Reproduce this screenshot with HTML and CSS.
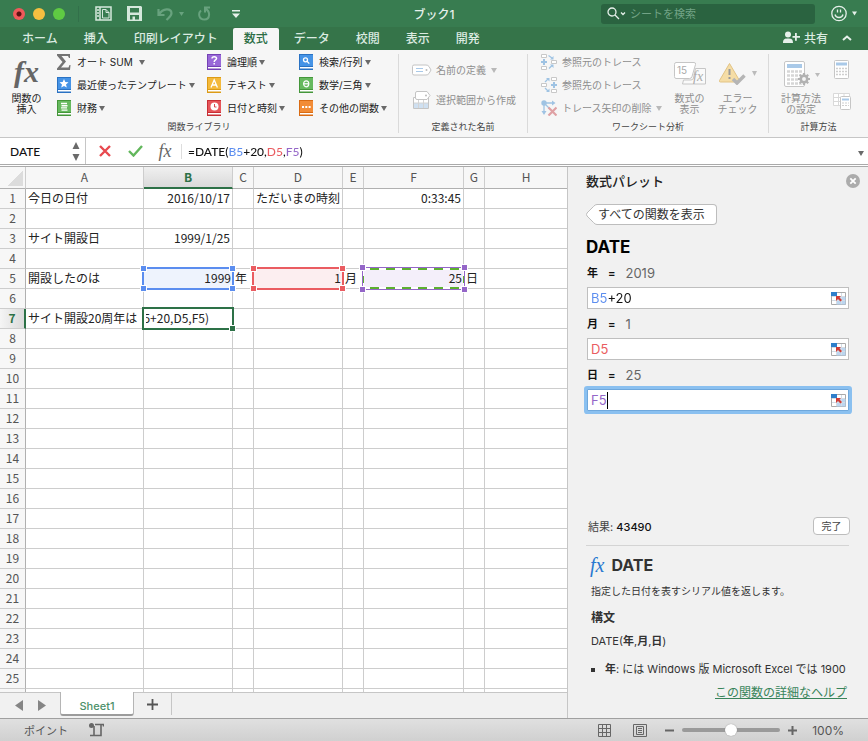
FILE: index.html
```html
<!DOCTYPE html>
<html lang="ja">
<head>
    <meta charset="UTF-8">
    <meta name="viewport" content="width=device-width, initial-scale=1.0">
    <title>ブック1</title>
    <link rel="stylesheet" href="styles.css">
</head>
<body>
    <header class="titlebar">
        <div class="quick">
            <button class="light red" aria-label="閉じる"></button>
            <button class="light yellow" aria-label="しまう"></button>
            <button class="light green" aria-label="拡大"></button>
            <span class="quick-sep"></span>
            <button class="quick-btn" aria-label="ファイル"><svg width="17" height="15" viewBox="0 0 17 15" fill="none" stroke="#d5e8dc" stroke-width="1.5"><path d="M1 1h15v13H1zM5 1v13M2 4h2M2 7h2M2 10h2"/><path d="M7.500 3.500h3.500l3 3v5.500h-6.500zM11 3.500v3h3" stroke-width="1"/></svg></button>
            <button class="quick-btn" aria-label="保存"><svg width="15" height="15" viewBox="0 0 15 15"><path d="M0 0h14l1 1v14H0z" fill="#d5e8dc"/><path d="M3 2h9v4.500H3zM3 9h9v4.500H8v-3H5.500v3H3z" fill="#387c50"/></svg></button>
            <button class="quick-btn undo" aria-label="元に戻す"><svg width="27" height="14" viewBox="0 0 27 14"><path d="M1.500 2v6h6M2 7.500C6 1 14 1 14.500 6c0 3-2 4-5 7" fill="none" stroke="#68a27e" stroke-width="2.200"/><path d="M22 5h5l-2.500 4z" fill="#68a27e"/></svg></button>
            <button class="quick-btn" aria-label="やり直し"><svg width="13" height="15" viewBox="0 0 13 15"><path d="M12 1.500H7v5M7 2.500c6 3 5 11-.5 11C.500 13.500 0 7 3 4.500" fill="none" stroke="#68a27e" stroke-width="2"/></svg></button>
            <button class="quick-btn more" aria-label="カスタマイズ"><svg width="8" height="8" viewBox="0 0 8 8"><path d="M0 0h8v1.500H0zM0 3.500h8L4 8z" fill="#e6f0ea"/></svg></button>
        </div>
        <h1 class="title">ブック1</h1>
        <div class="title-right">
            <label class="search">
                <svg width="19" height="13" viewBox="0 0 19 13" fill="none" stroke="#e6f0ea" stroke-width="1.300"><circle cx="5" cy="5" r="4"/><path d="M8 8l4 4M14 5.500l2 2 2-2"/></svg>
                <input type="search" placeholder="シートを検索" aria-label="シートを検索">
            </label>
            <button class="smile" aria-label="フィードバック"><svg width="26" height="17" viewBox="0 0 26 17"><g fill="none" stroke="#e6f0ea" stroke-width="1.300"><circle cx="8" cy="8.500" r="7.200"/><path d="M4 9.500c1 4 7 4 8 0M6.500 4.500v3M9.500 4.500v3"/></g><path d="M21 6.500h5l-2.500 4z" fill="#e6f0ea"/></svg></button>
        </div>
    </header>

    <nav class="tabs">
        <button class="tab">ホーム</button>
        <button class="tab">挿入</button>
        <button class="tab">印刷レイアウト</button>
        <button class="tab active">数式</button>
        <button class="tab">データ</button>
        <button class="tab">校閲</button>
        <button class="tab">表示</button>
        <button class="tab">開発</button>
        <button class="share"><svg width="17" height="13" viewBox="0 0 17 13" fill="#e6f0ea"><circle cx="5" cy="3.500" r="3"/><path d="M0 12c0-4 2-4.500 5-4.500s5 .5 5 4.500zM12 2h1.800v3H17v1.700h-3.200v3H12v-3H9.500V5H12z"/></svg>共有</button>
        <button class="collapse" aria-label="リボンを折りたたむ"><svg width="10" height="6" viewBox="0 0 10 6"><path d="M1 5l4-3.500L9 5" fill="none" stroke="#e6f0ea" stroke-width="2"/></svg></button>
    </nav>

    <section class="ribbon">
        <div class="group library">
            <div class="group-body">
                <button class="big"><span class="fx">fx</span>関数の<br>挿入</button>
                <div class="stack wide">
                    <button class="cmd"><svg width="14" height="16" viewBox="0 0 14 16"><path d="M0 0h13v4h-1L11 2H4.500l4.500 5.500L4 13.500h7.500l1-2.500h1l-.5 5H0v-1.500L5.500 8 0 1.500z" fill="#737373"/></svg>オート SUM<i class="arrow gap"></i></button>
                    <button class="cmd"><svg width="14" height="16" viewBox="0 0 14 16"><path d="M0 0h14v16H0z" fill="#2a72c3"/><path d="M1 1h13v11H1z" fill="#4593e6"/><path d="M1 13h13v1.500H1z" fill="#fff"/><path d="M7 2l1.300 3 3.200.300L9 7.400l.8 3.100L7 8.900l-2.800 1.600.8-3.100-2.500-2.100 3.200-.3z" fill="#fff"/></svg>最近使ったテンプレート<i class="arrow"></i></button>
                    <button class="cmd"><svg width="14" height="16" viewBox="0 0 14 16"><path d="M0 0h14v16H0z" fill="#44963a"/><path d="M1 1h13v11H1z" fill="#66b95e"/><path d="M1 13h13v1.500H1z" fill="#fff"/><g stroke="#fff" stroke-width="1.400"><path d="M4 3.500h6M4.500 5.700h6M4 7.900h6M4.500 10.100h6"/></g></svg>財務<i class="arrow"></i></button>
                </div>
                <div class="stack mid">
                    <button class="cmd"><svg width="14" height="16" viewBox="0 0 14 16"><path d="M0 0h14v16H0z" fill="#7441b5"/><path d="M1 1h13v11H1z" fill="#9968d8"/><path d="M1 13h13v1.500H1z" fill="#fff"/><path d="M5 4.500c0-2.500 4.500-2.500 4.500 0C9.500 6 7.200 6 7.200 8M7.200 9v1.500" fill="none" stroke="#fff" stroke-width="1.500"/></svg>論理順<i class="arrow"></i></button>
                    <button class="cmd"><svg width="14" height="16" viewBox="0 0 14 16"><path d="M0 0h14v16H0z" fill="#dc9b16"/><path d="M1 1h13v11H1z" fill="#f4b93b"/><path d="M1 13h13v1.500H1z" fill="#fff"/><path d="M4 10.500L7.200 3l3.200 7.500M5 8h4.400" fill="none" stroke="#fff" stroke-width="1.300"/></svg>テキスト<i class="arrow"></i></button>
                    <button class="cmd"><svg width="14" height="16" viewBox="0 0 14 16"><path d="M0 0h14v16H0z" fill="#c72f35"/><path d="M1 1h13v11H1z" fill="#e6555a"/><path d="M1 13h13v1.500H1z" fill="#fff"/><circle cx="7.500" cy="6.500" r="4" fill="#fff"/><path d="M7.500 4v3h2" fill="none" stroke="#d9474c"/></svg>日付と時刻<i class="arrow"></i></button>
                </div>
                <div class="stack">
                    <button class="cmd"><svg width="14" height="16" viewBox="0 0 14 16"><path d="M0 0h14v16H0z" fill="#2a72c3"/><path d="M1 1h13v11H1z" fill="#4593e6"/><path d="M1 13h13v1.500H1z" fill="#fff"/><g fill="none" stroke="#fff" stroke-width="1.300"><circle cx="6.500" cy="5.800" r="2"/><path d="M8 7.300l2.300 2.300"/></g></svg>検索/行列<i class="arrow"></i></button>
                    <button class="cmd"><svg width="14" height="16" viewBox="0 0 14 16"><path d="M0 0h14v16H0z" fill="#44963a"/><path d="M1 1h13v11H1z" fill="#66b95e"/><path d="M1 13h13v1.500H1z" fill="#fff"/><g fill="none" stroke="#fff" stroke-width="1.200"><ellipse cx="7.200" cy="6.800" rx="2.600" ry="3"/><path d="M4.600 6.800h5.200"/></g></svg>数学/三角<i class="arrow"></i></button>
                    <button class="cmd"><svg width="14" height="16" viewBox="0 0 14 16"><path d="M0 0h14v16H0z" fill="#d96b13"/><path d="M1 1h13v11H1z" fill="#f28c36"/><path d="M1 13h13v1.500H1z" fill="#fff"/><path d="M3 6h2v2H3zM6.300 6h2v2h-2zM9.600 6h2v2h-2z" fill="#fff"/></svg>その他の関数<i class="arrow"></i></button>
                </div>
            </div>
            <p class="group-label">関数ライブラリ</p>
        </div>
        <div class="group names">
            <div class="group-body">
                <div class="stack two">
                    <button class="cmd" disabled><svg width="20" height="18" viewBox="0 0 20 18"><path d="M2 4h12q2 0 3 1.500l2 3.500-2 3.500q-1 1.500-3 1.500H2q-1.500 0-1.500-1.500v-7Q.500 4 2 4z" fill="#fff" stroke="#c4c4c4"/><path d="M4 7.500h7M4 10.500h7" stroke="#a9c9e8"/><circle cx="14.500" cy="9" r="1" fill="#bbb"/></svg>名前の定義<i class="arrow"></i></button>
                    <button class="cmd" disabled><svg width="20" height="18" viewBox="0 0 20 18"><path d="M1.500 6.500h15v11h-15z" fill="#fff" stroke="#c4c4c4"/><path d="M2 12h14v5H2z" fill="#cfe0f1"/><path d="M6.500 9v8M11.500 9v8M2 12h14" stroke="#d4d4d4"/><path d="M5 .5h10l3 4-3 4H5q-1.500 0-1.500-1.500V2Q3.500.5 5 .5z" fill="#fff" stroke="#c4c4c4"/><circle cx="14" cy="4.500" r="1" fill="#bbb"/></svg>選択範囲から作成</button>
                </div>
            </div>
            <p class="group-label">定義された名前</p>
        </div>
        <div class="group trace">
            <div class="group-body">
                <div class="stack">
                    <button class="cmd" disabled><svg width="16" height="16" viewBox="0 0 16 16" fill="none"><path d="M.500.500h5v3h-5zM.500 12.500h5v3h-5zM10.500 6.500h5v3h-5z" fill="#fff" stroke="#c8c8c8"/><path d="M3 5v6M0 8h6" stroke="#9fc3e3" stroke-width="2"/><path d="M7.500 1.500L11 4M8 14.500l3-3" stroke="#9fc3e3" stroke-width="1.300"/><path d="M12.500 2v3.500H9zM12.500 14v-3.500H9z" fill="#9fc3e3"/></svg>参照元のトレース</button>
                    <button class="cmd" disabled><svg width="16" height="16" viewBox="0 0 16 16" fill="none"><path d="M10.500.500h5v3h-5zM10.500 12.500h5v3h-5zM.500 6.500h5v3h-5z" fill="#fff" stroke="#c8c8c8"/><path d="M13 5v6M10 8h6" stroke="#9fc3e3" stroke-width="2"/><path d="M4 5l3-3M4 11l3 3" stroke="#9fc3e3" stroke-width="1.300"/><path d="M5 1h3.500v3.500zM5 15h3.500v-3.500z" fill="#9fc3e3"/></svg>参照先のトレース</button>
                    <button class="cmd" disabled><svg width="16" height="16" viewBox="0 0 16 16" fill="none"><path d="M3 3h9M3 3v9M3 3l6 6" stroke="#9fc3e3" stroke-width="1.300"/><path d="M11 .5L14.500 3 11 5.500zM.500 11L3 15l2.500-4z" fill="#9fc3e3"/><circle cx="3" cy="3" r="2.700" fill="#9fc3e3"/><path d="M7.500 7.500l8 8M15.500 7.500l-8 8" stroke="#dfa1a4" stroke-width="2.200"/></svg>トレース矢印の削除<i class="arrow"></i></button>
                </div>
                <button class="big" disabled><svg width="32" height="23" viewBox="0 0 32 23"><path d="M2 .5h18q2 0 1.500 2L18 14.500q-.5 2-2.500 2H2q-1.500 0-1.500-2v-12Q.500.500 2 .500z" fill="#fff" stroke="#c6c6c6"/><path d="M21.500 6.500h10v15.500h-23L9.500 18H17q2 0 2.500-2z" fill="#fafafa" stroke="#c6c6c6"/><text x="3" y="12" class="icon-num">15</text><text x="19" y="19" class="icon-fx">fx</text></svg>数式の<br>表示</button>
                <button class="big with-arrow" disabled><svg width="40" height="23" viewBox="0 0 40 23"><path d="M11.500 1.500l10 17q.5 1.500-1 1.500h-18q-1.500 0-1-1.500z" fill="#f5dda6" stroke="#e2c384"/><path d="M11.500 7v6M11.500 15v2" stroke="#999" stroke-width="2"/><path d="M15 17l4 4 7.500-7.500" fill="none" stroke="#b5b5b5" stroke-width="3.500"/><path d="M34 9h5l-2.500 5z" fill="#bbb"/></svg>エラー<br>チェック</button>
            </div>
            <p class="group-label">ワークシート分析</p>
        </div>
        <div class="group calc">
            <div class="group-body">
                <button class="big with-arrow" disabled><svg width="36" height="26" viewBox="0 0 36 26"><rect x=".5" y=".5" width="20" height="25" rx="1.500" fill="#fff" stroke="#c6c6c6"/><path d="M3 3h15v4H3z" fill="#a9c9e8"/><path d="M3 10.500h15M3 14.500h15M3 18.500h15M3 22.500h15" stroke="#d6d6d6" stroke-width="2.500" stroke-dasharray="3 1"/><circle cx="20" cy="18" r="5.500" fill="#f5f5f5"/><circle cx="20" cy="18" r="3.200" fill="none" stroke="#b2b2b2" stroke-width="2.500"/><path d="M20 12v3M20 21v3M14 18h3M23 18h3M15.800 13.800l2 2M22.200 20.200l2 2M24.200 13.800l-2 2M17.800 20.200l-2 2" stroke="#b2b2b2" stroke-width="2.200"/><path d="M31 12h5l-2.500 4z" fill="#bbb"/></svg>計算方法<br>の設定</button>
                <div class="stack pair">
                    <button class="cmd" disabled aria-label="再計算"><svg width="18" height="19" viewBox="0 0 18 19"><rect x="1.500" y=".5" width="14" height="18" rx="1" fill="#fff" stroke="#c6c6c6"/><path d="M3 2.500h11v3H3z" fill="#a9c9e8"/><path d="M3 8.500h11M3 11.500h11M3 14.500h11" stroke="#cfcfcf" stroke-width="1.500" stroke-dasharray="2 1"/></svg></button>
                    <button class="cmd" disabled aria-label="シート再計算"><svg width="18" height="18" viewBox="0 0 18 18"><path d="M.500 1.500h16v12H.500zM5.500 1.500v12M11 1.500v3M.500 5.500h16M.500 9.500h8" fill="#fff" stroke="#d9d9d9"/><rect x="7.500" y="4.500" width="10" height="13" rx="1" fill="#fff" stroke="#c6c6c6"/><path d="M9 6.500h7v2H9z" fill="#a9c9e8"/><path d="M9 11h7M9 13.500h7" stroke="#cfcfcf" stroke-dasharray="2 1"/></svg></button>
                </div>
            </div>
            <p class="group-label">計算方法</p>
        </div>
    </section>

    <section class="formula-bar">
        <div class="name-box">
            <input type="text" value="DATE" aria-label="名前ボックス">
            <svg width="8" height="19" viewBox="0 0 8 19" fill="#6a6a6a"><path d="M4 0l3.500 7h-7zM4 19l3.500-7h-7z"/></svg>
        </div>
        <button class="bar-btn" aria-label="キャンセル"><svg width="12" height="12" viewBox="0 0 12 12"><path d="M1 1l10 10M11 1L1 11" stroke="#e8494f" stroke-width="2.400"/></svg></button>
        <button class="bar-btn" aria-label="入力"><svg width="15" height="12" viewBox="0 0 15 12"><path d="M1 6l4.500 4.500L14 1" fill="none" stroke="#62b75c" stroke-width="2.400"/></svg></button>
        <button class="bar-btn fx small">fx</button>
        <input class="formula" type="text" value="=DATE(B5+20,D5,F5)" aria-label="数式">
        <button class="expand" aria-label="数式バーを広げる"><i class="arrow"></i></button>
    </section>

    <main class="work">
        <div class="book">
            <div class="grid">
                <table class="sheet">
                    <colgroup>
                        <col class="c-num"><col class="c-a"><col class="c-b"><col class="c-s"><col class="c-b"><col class="c-s"><col class="c-f"><col class="c-s"><col>
                    </colgroup>
                    <thead>
                        <tr><th class="corner"></th><th>A</th><th class="current">B</th><th>C</th><th>D</th><th>E</th><th>F</th><th>G</th><th>H</th></tr>
                    </thead>
                    <tbody>
                        <tr><th>1</th><td>今日の日付</td><td class="num">2016/10/17</td><td></td><td>ただいまの時刻</td><td></td><td class="num">0:33:45</td><td></td><td></td></tr>
                        <tr><th>2</th><td></td><td></td><td></td><td></td><td></td><td></td><td></td><td></td></tr>
                        <tr><th>3</th><td>サイト開設日</td><td class="num">1999/1/25</td><td></td><td></td><td></td><td></td><td></td><td></td></tr>
                        <tr><th>4</th><td></td><td></td><td></td><td></td><td></td><td></td><td></td><td></td></tr>
                        <tr><th>5</th><td>開設したのは</td><td class="num ref blue">1999<span class="range"><i></i><i></i><i></i><i></i></span></td><td>年</td><td class="num ref rose">1<span class="range"><i></i><i></i><i></i><i></i></span></td><td>月</td><td class="num ref purple">25<span class="range"><i></i><i></i><i></i><i></i></span></td><td>日</td><td></td></tr>
                        <tr><th>6</th><td></td><td></td><td></td><td></td><td></td><td></td><td></td><td></td></tr>
                        <tr><th class="current">7</th><td>サイト開設20周年は</td><td class="editing"><span class="edit-text">5+20,D5,F5)</span><span class="cursor"></span></td><td></td><td></td><td></td><td></td><td></td><td></td></tr>
                    </tbody>
                </table>
            </div>
            <div class="sheet-tabs">
                <button class="nav" aria-label="前のシート"><svg width="8" height="11" viewBox="0 0 8 11"><path d="M8 0v11L0 5.500z" fill="#858585"/></svg></button>
                <button class="nav" aria-label="次のシート"><svg width="8" height="11" viewBox="0 0 8 11"><path d="M0 0v11l8-5.500z" fill="#858585"/></svg></button>
                <button class="sheet-tab">Sheet1</button>
                <button class="add" aria-label="シートの追加"><svg width="11" height="11" viewBox="0 0 11 11"><path d="M5.500 0v11M0 5.500h11" stroke="#555" stroke-width="1.800"/></svg></button>
            </div>
        </div>

        <aside class="palette">
            <div class="palette-head">
                <h2>数式パレット</h2>
                <button class="close" aria-label="閉じる"><svg width="14" height="14" viewBox="0 0 14 14"><circle cx="7" cy="7" r="7" fill="#acacac"/><path d="M4.300 4.300l5.400 5.400M9.700 4.300L4.300 9.700" stroke="#fff" stroke-width="1.800"/></svg></button>
            </div>
            <button class="show-all"><svg width="14" height="21" viewBox="0 0 14 21"><path d="M14 .5h-3Q9 .5 7.500 2.500L1 9q-1 1.500 0 3l6.500 6.500q1.500 2 3.500 2h3" fill="#fff" stroke="#bdbdbd"/></svg><span>すべての関数を表示</span></button>
            <h3>DATE</h3>
            <div class="field">
                <label for="year"><b>年</b><b>=</b><span>2019</span></label>
                <div class="box"><input id="year" class="in-blue" type="text" value="B5+20"><button class="pick" aria-label="範囲を選択"><svg width="15" height="13" viewBox="0 0 15 13"><path d="M.500.500h14v12H.500z" fill="#fff" stroke="#aaa"/><path d="M5.500 5h9v7.500h-9z" fill="#bcd6f0"/><path d="M5.500 1v11M10.500 1v11M1 4.500h13M1 8.500h13" stroke="#d4dde6"/><path d="M0 0h6v4H0z" fill="#2f7fca"/><path d="M5 4h5L8.500 5.500 11 8 9.500 9.500 7 7 5 9z" fill="#d13d35"/></svg></button></div>
            </div>
            <div class="field">
                <label for="month"><b>月</b><b>=</b><span>1</span></label>
                <div class="box"><input id="month" class="in-red" type="text" value="D5"><button class="pick" aria-label="範囲を選択"><svg width="15" height="13" viewBox="0 0 15 13"><path d="M.500.500h14v12H.500z" fill="#fff" stroke="#aaa"/><path d="M5.500 5h9v7.500h-9z" fill="#bcd6f0"/><path d="M5.500 1v11M10.500 1v11M1 4.500h13M1 8.500h13" stroke="#d4dde6"/><path d="M0 0h6v4H0z" fill="#2f7fca"/><path d="M5 4h5L8.500 5.500 11 8 9.500 9.500 7 7 5 9z" fill="#d13d35"/></svg></button></div>
            </div>
            <div class="field">
                <label for="day"><b>日</b><b>=</b><span>25</span></label>
                <div class="box focused"><input id="day" class="in-purple" type="text" value="F5"><span class="caret"></span><button class="pick" aria-label="範囲を選択"><svg width="15" height="13" viewBox="0 0 15 13"><path d="M.500.500h14v12H.500z" fill="#fff" stroke="#aaa"/><path d="M5.500 5h9v7.500h-9z" fill="#bcd6f0"/><path d="M5.500 1v11M10.500 1v11M1 4.500h13M1 8.500h13" stroke="#d4dde6"/><path d="M0 0h6v4H0z" fill="#2f7fca"/><path d="M5 4h5L8.500 5.500 11 8 9.500 9.500 7 7 5 9z" fill="#d13d35"/></svg></button></div>
            </div>
            <div class="result">
                <p>結果: <span>43490</span></p>
                <button class="done">完了</button>
            </div>
            <div class="help">
                <h4><span class="fx help-fx">fx</span>DATE</h4>
                <p class="desc">指定した日付を表すシリアル値を返します。</p>
                <h5>構文</h5>
                <p class="syntax">DATE(<b>年</b>,<b>月</b>,<b>日</b>)</p>
                <ul>
                    <li><b>年</b>: には Windows 版 Microsoft Excel では 1900</li>
                </ul>
                <a href="#">この関数の詳細なヘルプ</a>
            </div>
        </aside>
    </main>

    <footer class="status">
        <span class="mode">ポイント</span>
        <button aria-label="マクロの記録"><svg width="15" height="14" viewBox="0 0 15 14"><circle cx="2.500" cy="2.500" r="2.500" fill="#666"/><path d="M6 1.500h8.500v2M12 2v10.500H1M5 3v9" fill="none" stroke="#666" stroke-width="1.600"/></svg></button>
        <span class="spacer"></span>
        <button class="view" aria-label="標準"><svg width="13" height="13" viewBox="0 0 13 13"><path d="M.500.500h12v12H.500zM4.500.500v12M8.500.500v12M.500 4.500h12M.500 8.500h12" fill="none" stroke="#666"/></svg></button>
        <button class="view" aria-label="ページレイアウト"><svg width="14" height="13" viewBox="0 0 14 13"><path d="M.500.500h13v12H.500zM3.500 2.500h7v8h-7zM5 4.500h4M5 6.500h4M5 8.500h4" fill="none" stroke="#666"/></svg></button>
        <button class="minus" aria-label="縮小"><svg width="9" height="9" viewBox="0 0 9 9"><path d="M0 4.500h9" stroke="#666" stroke-width="2"/></svg></button>
        <input class="zoom" type="range" min="0" max="100" value="50" aria-label="ズーム">
        <button class="plus" aria-label="拡大"><svg width="9" height="9" viewBox="0 0 9 9"><path d="M0 4.500h9M4.500 0v9" stroke="#666" stroke-width="2"/></svg></button>
        <span class="percent">100%</span>
    </footer>

    <script>
        // fill the rest of the sheet with empty rows
        const tbody = document.querySelector('.sheet tbody');
        for (let n = 8; n <= 26; n++) {
            const row = tbody.insertRow();
            const head = document.createElement('th');
            head.textContent = n <= 25 ? n : '';
            row.appendChild(head);
            for (let c = 0; c < 8; c++) {
                row.insertCell();
            }
        }
    </script>
</body>
</html>
```

FILE: styles.css
```css
* {
    box-sizing: border-box;
}
body {
    margin: 0;
    height: 100vh;
    display: flex;
    flex-direction: column;
    overflow: hidden;
    background: #f1f1f1;
    color: #222;
    font-family: Inter, "Noto Sans CJK JP", sans-serif;
    font-size: 12px;
}
button, input {
    font: inherit;
    color: inherit;
    margin: 0;
    padding: 0;
    border: none;
    background: none;
}
input {
    outline: none;
    min-width: 0;
}
svg {
    display: block;
    flex: none;
}
h1, h2, h3, h4, h5, p, ul {
    margin: 0;
    padding: 0;
}
.arrow {
    display: inline-block;
    flex: none;
    border: 3px solid transparent;
    border-top: 5px solid #6a6a6a;
    border-bottom: none;
    margin-left: 4px;
}
.fx {
    font-family: "Liberation Serif", serif;
    font-style: italic;
    font-weight: bold;
    color: #666;
}

/* title bar */
.titlebar {
    display: grid;
    grid-template-columns: 1fr auto 1fr;
    align-items: center;
    height: 27px;
    flex: none;
    background: #387c50;
    color: #e6f0ea;
}
.quick {
    display: flex;
    align-items: center;
    gap: 8px;
    padding-left: 13px;
}
.light {
    width: 12px;
    height: 12px;
    border-radius: 50%;
}
.red {
    background: radial-gradient(circle, #5c1212 2px, #f0595a 3px);
}
.yellow {
    background: #f6bf40;
}
.green {
    background: #5fca43;
}
.quick-sep {
    width: 1px;
    height: 16px;
    margin: 0 8px 0 5px;
    background: #32704a;
}
.quick-btn {
    margin-right: 7px;
}
.quick-btn.undo {
    margin: 0 6px 0 0;
}
.quick-btn.more {
    margin-left: 6px;
}
.title {
    font-size: 12px;
    font-weight: 500;
}
.title-right {
    display: flex;
    justify-content: flex-end;
    align-items: center;
    gap: 16px;
    padding-right: 11px;
}
.search {
    display: flex;
    align-items: center;
    gap: 4px;
    width: 214px;
    height: 20px;
    padding-left: 6px;
    border-radius: 3px;
    background: #2a6340;
}
.search input {
    flex: 1;
    font-size: 11px;
}
.search input::placeholder {
    color: #72a386;
}

/* ribbon tabs */
.tabs {
    display: flex;
    gap: 4px;
    height: 23px;
    flex: none;
    padding: 1px 16px 0 11px;
    background: #357449;
    color: #dcebe1;
}
.tab {
    padding: 0 11px;
    font-size: 12px;
    font-weight: 500;
    line-height: 20px;
    white-space: nowrap;
}
.tab.active {
    background: #f6f6f6;
    color: #2b6d44;
    border-radius: 2px 2px 0 0;
}
.share {
    display: flex;
    align-items: center;
    gap: 4px;
    margin-left: auto;
    padding-bottom: 3px;
    font-weight: 500;
    white-space: nowrap;
}
.collapse {
    padding: 0 0 2px 10px;
}

/* ribbon */
.ribbon {
    display: flex;
    height: 88px;
    flex: none;
    background: #f6f6f6;
    border-bottom: 1px solid #c6c6c6;
    font-size: 10px;
    color: #222;
}
.group {
    display: flex;
    flex-direction: column;
    margin: 4px 0;
    border-right: 1px solid #dadada;
}
.group-body {
    display: flex;
    flex: none;
    height: 66px;
}
.group-label {
    font-size: 9px;
    line-height: 14px;
    text-align: center;
    color: #444;
}
.library {
    flex: 0 0 399px;
}
.names {
    flex: 0 0 129px;
}
.trace {
    flex: 0 0 241px;
}
.calc {
    flex: 1;
    border-right: none;
}
.big {
    display: flex;
    flex-direction: column;
    align-items: center;
    justify-content: flex-end;
    line-height: 11px;
    padding-bottom: 5px;
    white-space: nowrap;
    text-align: center;
}
.big .fx {
    font-size: 30px;
    line-height: 30px;
    margin-bottom: 6px;
}
.big svg {
    margin-bottom: 8px;
}
.library .big {
    width: 53px;
    padding-bottom: 5px;
}
.stack {
    display: flex;
    flex-direction: column;
    justify-content: space-between;
    margin-bottom: 4px;
}
.cmd {
    display: flex;
    align-items: center;
    height: 16px;
    gap: 6px;
    line-height: 16px;
    white-space: nowrap;
}
.cmd .arrow {
    margin-left: -4px;
}
.cmd .arrow.gap {
    margin-left: 0;
}
.wide {
    width: 150px;
    margin-left: 4px;
}
.mid {
    width: 92px;
}
button:disabled {
    color: #8e8e8e;
}
button:disabled .arrow {
    border-top-color: #b9b9b9;
}
.names .stack {
    margin-left: 13px;
    justify-content: center;
    gap: 14px;
}
.names .cmd {
    gap: 4px;
}
.names .cmd .arrow {
    margin-left: 1px;
}
.trace .stack {
    margin-left: 13px;
}
.trace .cmd .arrow {
    margin-left: -1px;
}
.trace .big {
    width: 40px;
    margin-left: 8px;
}
.trace .cmd {
    gap: 5px;
}
.with-arrow svg {
    align-self: flex-start;
}
.calc .big {
    margin-left: 12px;
}
.calc .with-arrow svg {
    margin: 0 0 6px 3px;
}
.calc .stack {
    margin-left: 12px;
    padding: 7px 0 7px;
}
.icon-num {
    font-family: Inter, sans-serif;
    font-size: 10px;
    fill: #aaa;
}
.icon-fx {
    font-family: "Liberation Serif", serif;
    font-size: 14px;
    font-style: italic;
    fill: #aaa;
}

/* formula bar */
.formula-bar {
    display: flex;
    align-items: center;
    height: 29px;
    flex: none;
    background: #fff;
    border-bottom: 3px double #aaa;
    font-family: Lato, sans-serif;
    font-size: 12px;
    color: #111;
}
.name-box {
    display: flex;
    align-items: center;
    align-self: stretch;
    width: 86px;
    padding: 0 5px 0 10px;
    border-right: 1px solid #c6c6c6;
}
.name-box input {
    flex: 1;
    font-weight: 500;
}
.bar-btn {
    display: flex;
    justify-content: center;
    width: 30px;
}
.name-box + .bar-btn {
    margin-left: 4px;
}
.fx.small {
    font-size: 18px;
    line-height: 22px;
    font-weight: normal;
}
.formula {
    flex: 1;
    margin-left: 1px;
    padding-left: 6px;
    border-left: 1px solid #ddd;
    font-weight: 500;
    background: linear-gradient(to right, #111 47px, #5b8def 47px 62px, #111 62px 85px, #ea5c61 85px 100px, #111 100px 103px, #9466c8 103px 117px, #111 117px);
    background-clip: text;
    -webkit-text-fill-color: transparent;
}
.expand {
    padding-right: 4px;
}

/* sheet */
.work {
    display: flex;
    flex: 1;
    min-height: 0;
}
.book {
    flex: 1;
    display: flex;
    flex-direction: column;
    min-width: 0;
    border-right: 1px solid #c6c6c6;
}
.grid {
    flex: 1;
    overflow: hidden;
    background: #fff;
}
.sheet {
    width: 100%;
    table-layout: fixed;
    border-collapse: separate;
    border-spacing: 0;
    font-family: "Noto Sans CJK JP", sans-serif;
    font-size: 12px;
    line-height: 17px;
    color: #222;
}
.c-num {
    width: 26px;
}
.c-a {
    width: 118px;
}
.c-b {
    width: 89px;
}
.c-s {
    width: 21px;
}
.c-f {
    width: 100px;
}
.sheet th, .sheet td {
    height: 20px;
    padding: 0 2px 2px;
    border-right: 1px solid #cdcdcd;
    border-bottom: 1px solid #cdcdcd;
    white-space: nowrap;
    text-align: left;
}
.sheet td:last-child, .sheet th:last-child {
    border-right: none;
}
.sheet th {
    padding: 0 0 2px;
    text-align: center;
    font-weight: normal;
    color: #555;
    background: #f7f7f7;
}
.sheet thead th {
    height: 22px;
    border-bottom-color: #b0b0b0;
}
.sheet tbody th {
    border-right-color: #b0b0b0;
}
.sheet th.current {
    background: #e3e3e3;
    color: #2d7147;
    font-weight: bold;
}
.sheet thead th.current {
    border-bottom: 2px solid #2d7147;
    background: linear-gradient(#f0f0f0, #dadada);
}
.sheet tbody th.current {
    border-right: 2px solid #2d7147;
    background: linear-gradient(to right, #f5f5f5, #dadada);
}
.sheet .corner {
    background: linear-gradient(135deg, #f7f7f7 50%, #dcdcdc 50%) no-repeat 7px 4px / 16px 15px #f7f7f7;
}
.sheet td.num {
    text-align: right;
}
.sheet td.ref, .sheet td.editing {
    position: relative;
    padding: 0 1px 2px;
}
.blue {
    --line: #5b8def;
    background: #eef3fd;
}
.rose {
    --line: #ea5c61;
    background: #fceef0;
}
.purple {
    --line: #9466c8;
    background: #f4effa;
}
.range {
    position: absolute;
    inset: -2px;
    border: 2px solid var(--line);
}
/* marching ants inside the purple frame */
.purple .range {
    border-width: 1px;
    background:
        repeating-linear-gradient(to right, #fff 0 7px, #5cb030 7px 16px) top / 100% 2px no-repeat,
        repeating-linear-gradient(to right, #fff 0 7px, #5cb030 7px 16px) bottom / 100% 2px no-repeat,
        linear-gradient(#fff 8px, #5cb030 8px 15px, #fff 15px) left / 1px 100% no-repeat,
        linear-gradient(#fff 8px, #5cb030 8px 15px, #fff 15px) right / 1px 100% no-repeat;
}
.range i {
    position: absolute;
    width: 5px;
    height: 5px;
    background: var(--line);
    box-shadow: 0 0 0 1px #fff;
}
.range i:nth-child(1) {
    top: -3px;
    left: -3px;
}
.range i:nth-child(2) {
    top: -3px;
    right: -3px;
}
.range i:nth-child(3) {
    bottom: -3px;
    left: -3px;
}
.range i:nth-child(4) {
    bottom: -3px;
    right: -3px;
}
.edit-text {
    display: flex;
    justify-content: flex-end;
    width: 63px;
    margin-left: 1px;
    overflow: hidden;
}
.cursor {
    position: absolute;
    inset: -2px;
    border: 2px solid #2d7147;
}
.cursor::after {
    content: "";
    position: absolute;
    right: -3px;
    bottom: -3px;
    width: 5px;
    height: 5px;
    background: #2d7147;
    box-shadow: 0 0 0 1px #fff;
}

/* sheet tabs */
.sheet-tabs {
    display: flex;
    align-items: center;
    height: 26px;
    flex: none;
    padding-left: 7px;
    background: #f1f1f1;
    border-top: 1px solid #c6c6c6;
}
.nav {
    display: flex;
    justify-content: center;
    width: 23px;
}
.sheet-tab {
    align-self: flex-start;
    width: 74px;
    height: 24px;
    margin: -1px 0 0 7px;
    background: #fff;
    border: 1px solid #b5b5b5;
    border-top: none;
    border-bottom: 2px solid #9c9c9c;
    border-radius: 0 0 3px 3px;
    font-size: 11px;
    font-weight: 500;
    padding-top: 6px;
    color: #4b9069;
}
.add {
    display: flex;
    align-items: center;
    justify-content: center;
    align-self: stretch;
    width: 38px;
    margin-bottom: 3px;
    border-right: 1px solid #c6c6c6;
}

/* formula palette */
.palette {
    display: flex;
    flex-direction: column;
    width: 300px;
    flex: none;
    padding: 4px 19px 16px 18px;
    overflow: hidden;
}
.palette-head {
    display: flex;
    justify-content: space-between;
    align-items: center;
    margin-right: -11px;
}
.palette-head h2 {
    font-size: 13px;
    line-height: 20px;
    font-weight: 500;
}
.show-all {
    display: flex;
    align-self: flex-start;
    height: 21px;
    margin: 13px 0 11px 0;
    color: #333;
}
.show-all span {
    height: 21px;
    line-height: 20px;
    padding: 0 11px 0 0;
    margin-left: -2px;
    background: #fff;
    border: 1px solid #bdbdbd;
    border-left: none;
    border-radius: 0 4px 4px 0;
    white-space: nowrap;
}
.palette h3 {
    font-size: 17px;
    line-height: 22px;
    color: #000;
}
.field {
    padding-left: 1px;
}
.field label {
    display: flex;
    gap: 10px;
    height: 29px;
    line-height: 31px;
    font-size: 12px;
}
.field label b {
    font-size: 11px;
    color: #111;
}
.field label span {
    color: #666;
    font-size: 13px;
}
.box {
    position: relative;
    display: flex;
    align-items: center;
    height: 22px;
    padding: 0 2px 0 3px;
    background: #fff;
    border: 1px solid #bfbfbf;
    font-size: 13px;
}
.box input {
    flex: 1;
    height: 20px;
}
.box.focused {
    border-color: #6fa8dc;
    box-shadow: 0 0 0 3px #8ac0f0;
    border-radius: 1px;
}
.in-blue {
    background: linear-gradient(to right, #5b8def 17px, #111 17px);
    background-clip: text;
    -webkit-text-fill-color: transparent;
}
.in-red {
    color: #ea5c61;
}
.in-purple {
    color: #9466c8;
}
.caret {
    position: absolute;
    left: 19px;
    top: 2px;
    width: 1px;
    height: 17px;
    background: #000;
}
.result {
    display: flex;
    justify-content: space-between;
    align-items: center;
    margin-top: auto;
    padding: 0 0 10px 2px;
    border-bottom: 1px solid #d4d4d4;
    font-size: 11px;
    color: #444;
}
.result span {
    color: #111;
    font-weight: 500;
}
.done {
    width: 37px;
    height: 18px;
    margin-right: -1px;
    background: #fff;
    border: 1px solid #bdbdbd;
    border-radius: 4px;
    font-size: 10px;
    line-height: 14px;
}
.help {
    display: flex;
    flex-direction: column;
    padding: 8px 2px 0 5px;
    color: #333;
}
.help h4 {
    display: flex;
    align-items: center;
    gap: 7px;
    margin-left: -1px;
    font-size: 16px;
    line-height: 22px;
}
.help-fx {
    font-size: 20px;
    color: #2878d0;
    font-weight: normal;
}
.desc {
    font-size: 10px;
    line-height: 16px;
    margin-top: 7px;
    white-space: nowrap;
}
.help h5 {
    font-size: 12px;
    line-height: 18px;
    margin-top: 10px;
}
.syntax {
    font-size: 11px;
    line-height: 16px;
    margin-top: 6px;
}
.help ul {
    list-style: square;
    padding-left: 14px;
    margin-top: 12px;
    font-size: 11px;
    line-height: 16px;
    white-space: nowrap;
}
.help a {
    align-self: flex-end;
    margin-top: 7px;
    line-height: 18px;
    color: #38845a;
    white-space: nowrap;
}

/* status bar */
.status {
    display: flex;
    align-items: center;
    height: 23px;
    flex: none;
    padding: 0 24px;
    background: linear-gradient(#e0e0e0, #d0d0d0);
    border-top: 1px solid #a0a0a0;
    color: #555;
}
.mode {
    font-size: 11px;
    margin-right: 21px;
}
.spacer {
    flex: 1;
}
.view {
    margin-right: 22px;
}
.minus {
    margin: 0 8px 0 -4px;
}
.zoom {
    appearance: none;
    width: 98px;
    height: 13px;
}
.zoom::-webkit-slider-runnable-track {
    height: 4px;
    border-radius: 2px;
    background: #9a9a9a;
}
.zoom::-webkit-slider-thumb {
    appearance: none;
    width: 12px;
    height: 12px;
    margin-top: -4px;
    border-radius: 50%;
    background: #fff;
    box-shadow: 0 0 1px #777;
}
.plus {
    margin: 0 15px 0 8px;
}
```
